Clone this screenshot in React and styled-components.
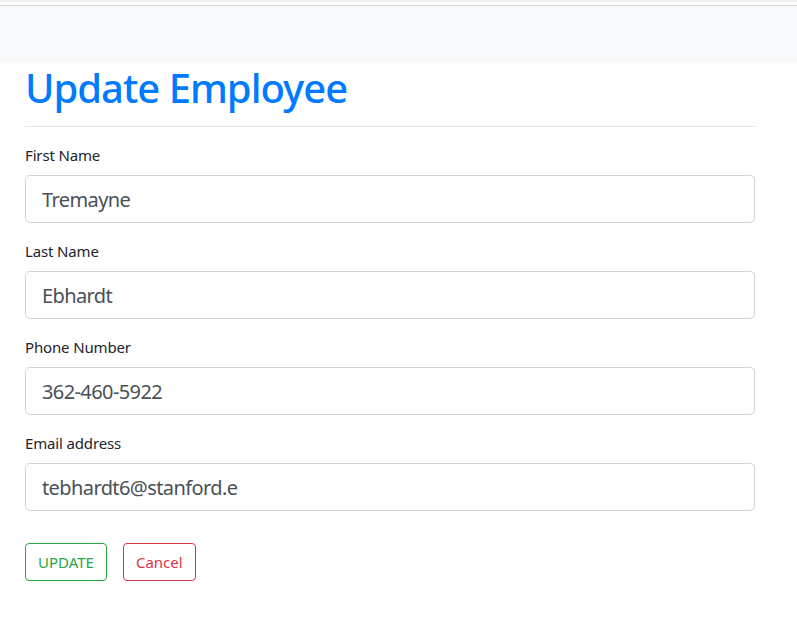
import React from 'react';
import styled, { createGlobalStyle } from 'styled-components';

const GlobalStyle = createGlobalStyle`
  html, body {
    margin: 0;
    padding: 0;
    background: #fff;
  }
  body {
    font-family: "Segoe UI", "Noto Sans", "Open Sans", sans-serif;
    font-size: 16px;
    line-height: 1.5;
    color: #212529;
  }
  * {
    box-sizing: border-box;
  }
`;

const fields = [
  { id: 'firstName', label: 'First Name', value: 'Tremayne' },
  { id: 'lastName', label: 'Last Name', value: 'Ebhardt' },
  { id: 'phone', label: 'Phone Number', value: '362-460-5922' },
  { id: 'email', label: 'Email address', value: 'tebhardt6@stanford.e' },
];

const App = () => {
  return (
    <>
      <GlobalStyle />
      <TopStrip />
      <Navbar />
      <Container>
        <Title>Update Employee</Title>
        <Divider />
        <form onSubmit={(e) => e.preventDefault()}>
          {fields.map(({ id, label, value }) => (
            <FormGroup key={id}>
              <Label htmlFor={id}>{label}</Label>
              <Input id={id} defaultValue={value} />
            </FormGroup>
          ))}
          <Actions>
            <Button type="submit" variant="success">UPDATE</Button>
            <Button type="button" variant="danger">Cancel</Button>
          </Actions>
        </form>
      </Container>
    </>
  );
};

export default App;

const colors = {
  success: '#28a745',
  danger: '#dc3545',
};

const TopStrip = styled.div`
  height: 6px;
  border-top: 2px solid #f0f0f0;
  border-bottom: 1px solid #d8d8d8;
`;

const Navbar = styled.nav`
  height: 56px;
  background: #f8f9fa;
`;

const Container = styled.main`
  width: 730px;
  margin-left: 25px;
`;

const Title = styled.h1`
  margin: 0;
  padding-top: 4px;
  font-size: 40px;
  font-weight: 500;
  line-height: 44px;
  letter-spacing: -1px;
  color: #007bff;
`;

const Divider = styled.hr`
  margin: 16px 0;
  border: 0;
  border-top: 1px solid rgba(0, 0, 0, 0.1);
`;

const FormGroup = styled.div`
  margin-bottom: 16px;
`;

const Label = styled.label`
  display: inline-block;
  margin-bottom: 8px;
  font-size: 15px;
  line-height: 24px;
  letter-spacing: -0.15px;
`;

const Input = styled.input`
  display: block;
  width: 100%;
  height: 48px;
  padding: 8px 16px;
  font-family: inherit;
  font-size: 20px;
  line-height: 1.5;
  letter-spacing: -0.6px;
  color: #495057;
  background: #fff;
  border: 1px solid #ced4da;
  border-radius: 4.8px;
  outline: none;
`;

const Actions = styled.div`
  display: flex;
  gap: 16px;
  margin-top: 32px;
`;

const Button = styled.button`
  height: 38px;
  padding: 6px 12px;
  font-family: inherit;
  font-size: 15px;
  line-height: 1.5;
  color: ${({ variant }) => colors[variant]};
  background: transparent;
  border: 1px solid ${({ variant }) => colors[variant]};
  border-radius: 4px;
  cursor: pointer;
`;
